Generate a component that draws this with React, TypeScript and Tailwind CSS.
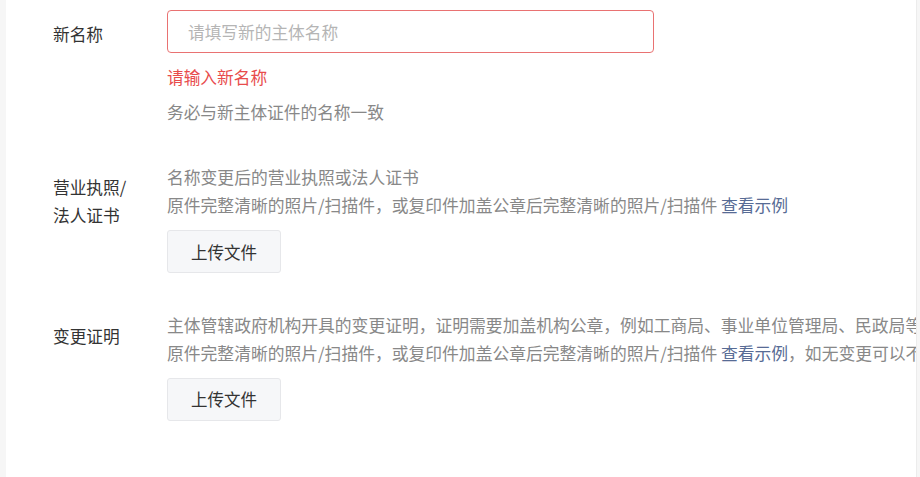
import React from 'react';

const font = { fontFamily: '"Noto Sans CJK SC", "Noto Sans", sans-serif' };

const UploadButton = () => (
  <button className="mt-[11px] h-[43px] w-[114px] rounded-[3px] border border-[#e6e7ea] bg-[#f6f7f9] text-[16.5px] text-[#333]">
    上传文件
  </button>
);

const Label = ({ children }: { children: React.ReactNode }) => (
  <div className="w-[114px] shrink-0 pt-[10px] text-[16.7px] leading-[28px] text-[#333]">{children}</div>
);

export default function App() {
  return (
    <div className="flex h-[477px] w-[920px] overflow-hidden bg-[#f6f6f6]" style={font}>
      <main className="ml-[6px] mr-[3px] flex-1 overflow-hidden border-r border-[#ececec] bg-white pl-[47px] pt-[10px]">
        {/* 新名称 */}
        <div className="flex">
          <Label>新名称</Label>
          <div className="flex flex-col">
            <input
              className="h-[43px] w-[487px] rounded-[4px] border border-[#e97272] px-[20px] text-[16.7px] outline-none placeholder:text-[#b5b5b5]"
              placeholder="请填写新的主体名称"
            />
            <p className="mt-[10px] text-[16.7px] leading-[28px] text-[#e84c4c]">请输入新名称</p>
            <p className="mt-[7px] text-[16.7px] leading-[28px] text-[#888]">务必与新主体证件的名称一致</p>
          </div>
        </div>

        {/* 营业执照 */}
        <div className="mt-[37px] flex">
          <Label>
            营业执照/
            <br />
            法人证书
          </Label>
          <div className="flex flex-col items-start text-[16.8px] leading-[28px] text-[#888]">
            <p>名称变更后的营业执照或法人证书</p>
            <p className="whitespace-nowrap">
              原件完整清晰的照片/扫描件，或复印件加盖公章后完整清晰的照片/扫描件 <span className="text-[#576b95]">查看示例</span>
            </p>
            <UploadButton />
          </div>
        </div>

        {/* 变更证明 */}
        <div className="mt-[39px] flex">
          <Label>变更证明</Label>
          <div className="flex flex-col items-start text-[16.8px] leading-[27.5px] text-[#888]">
            <p className="whitespace-nowrap">
              主体管辖政府机构开具的变更证明，证明需要加盖机构公章，例如工商局、事业单位管理局、民政局等
            </p>
            <p className="whitespace-nowrap">
              原件完整清晰的照片/扫描件，或复印件加盖公章后完整清晰的照片/扫描件 <span className="text-[#576b95]">查看示例</span>，如无变更可以不填
            </p>
            <UploadButton />
          </div>
        </div>
      </main>
    </div>
  );
}
